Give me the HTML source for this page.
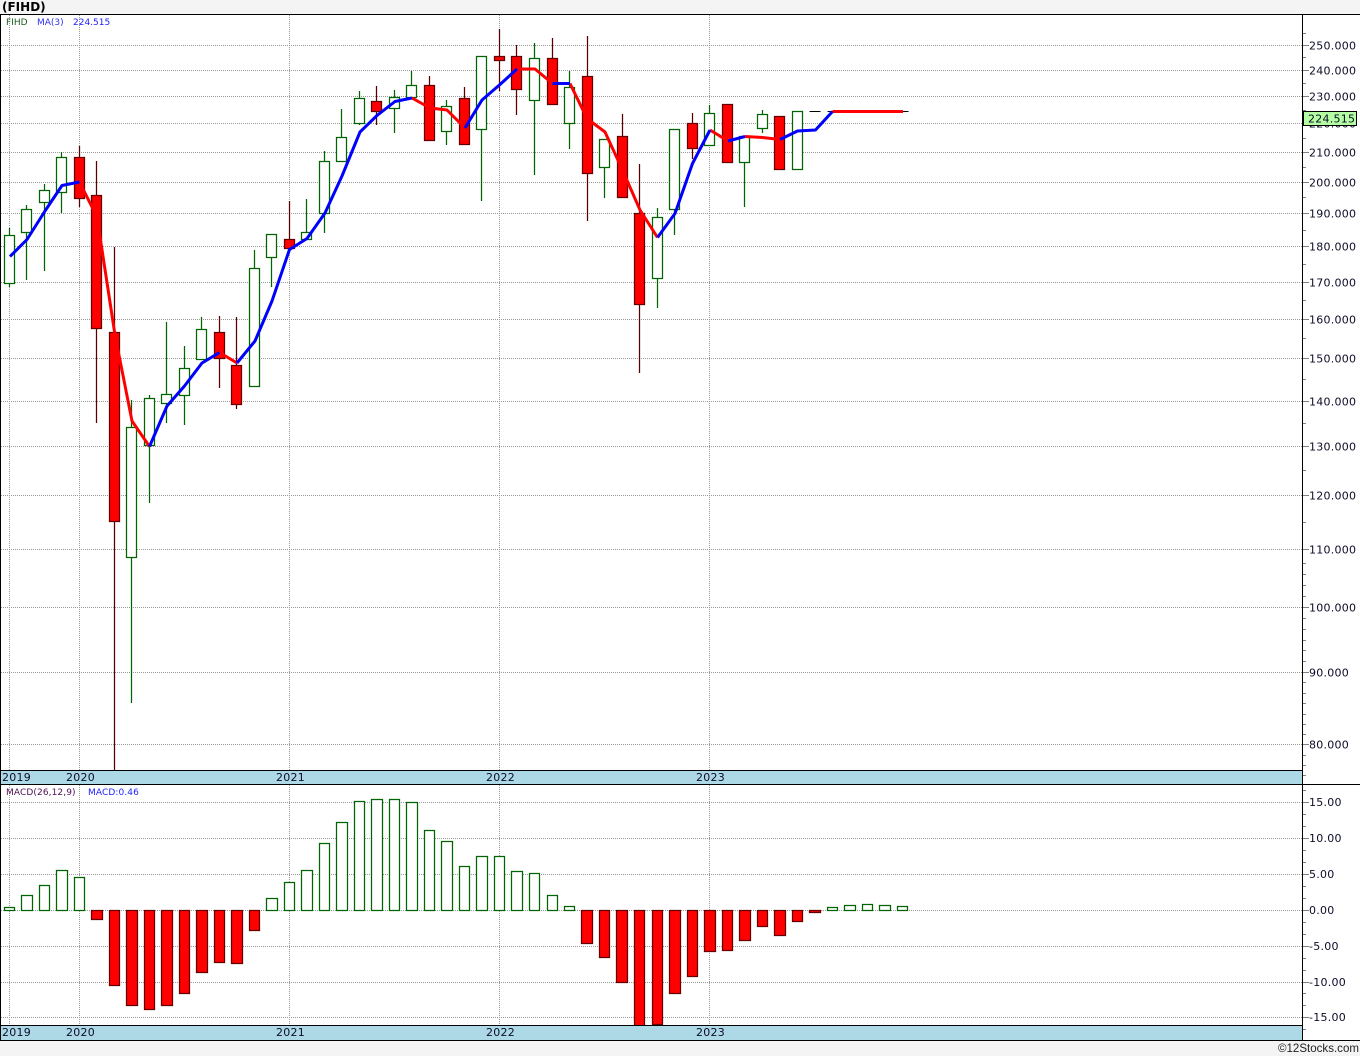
<!DOCTYPE html>
<html lang="en"><head><meta charset="utf-8"><title>FIHD</title>
<style>
html,body{margin:0;padding:0;background:#f4f4f4;width:1360px;height:1056px;overflow:hidden}
svg{display:block}
text{font-family:"DejaVu Sans","Liberation Sans",sans-serif;font-size:11px;fill:#0c0c28;letter-spacing:.25px}
.s{font-size:9px;letter-spacing:0}
</style></head><body>
<svg width="1360" height="1056" viewBox="0 0 1360 1056" xmlns="http://www.w3.org/2000/svg">
<rect x="0" y="0" width="1360" height="1056" fill="#f4f4f4"/>
<rect x="0" y="14" width="1360" height="1026" fill="#fff"/>
<g fill="none" stroke="#999" stroke-dasharray="1 1" shape-rendering="crispEdges">
<path d="M1 45.5H1303M1 70.5H1303M1 96.5H1303M1 123.5H1303M1 152.5H1303M1 182.5H1303M1 213.5H1303M1 246.5H1303M1 282.5H1303M1 319.5H1303M1 358.5H1303M1 401.5H1303M1 446.5H1303M1 495.5H1303M1 549.5H1303M1 607.5H1303M1 672.5H1303M1 744.5H1303"/>
<path d="M1 802.5H1303M1 838.5H1303M1 874.5H1303M1 910.5H1303M1 946.5H1303M1 982.5H1303M1 1017.5H1303"/>
<path d="M9.5 15V770M79.5 15V770M289.5 15V770M499.5 15V770M709.5 15V770"/>
<path d="M9.5 785V1025M79.5 785V1025M289.5 785V1025M499.5 785V1025M709.5 785V1025"/>
</g>
<g fill="none" stroke="#808080" shape-rendering="crispEdges">
<path d="M1303 45.5h6M1303 70.5h6M1303 96.5h6M1303 123.5h6M1303 152.5h6M1303 182.5h6M1303 213.5h6M1303 246.5h6M1303 282.5h6M1303 319.5h6M1303 358.5h6M1303 401.5h6M1303 446.5h6M1303 495.5h6M1303 549.5h6M1303 607.5h6M1303 672.5h6M1303 744.5h6M1303 802.5h6M1303 838.5h6M1303 874.5h6M1303 910.5h6M1303 946.5h6M1303 982.5h6M1303 1017.5h6"/>
<path d="M1303 33.5h3M1303 57.5h3M1303 83.5h3M1303 110.5h3M1303 138.5h3M1303 167.5h3M1303 197.5h3M1303 230.5h3M1303 264.5h3M1303 300.5h3M1303 338.5h3M1303 379.5h3M1303 423.5h3M1303 470.5h3M1303 522.5h3M1303 563.5h3M1303 574.5h3M1303 585.5h3M1303 596.5h3M1303 618.5h3M1303 629.5h3M1303 640.5h3M1303 650.5h3M1303 661.5h3M1303 682.5h3M1303 693.5h3M1303 703.5h3M1303 714.5h3M1303 724.5h3M1303 734.5h3M1303 755.5h3M1303 765.5h3M1303 775.5h3"/>
<path d="M1303 790.5h3M1303 814.5h3M1303 826.5h3M1303 850.5h3M1303 862.5h3M1303 886.5h3M1303 898.5h3M1303 922.5h3M1303 934.5h3M1303 958.5h3M1303 970.5h3M1303 993.5h3M1303 1005.5h3M1303 1029.5h3"/>
</g>
<!-- wicks -->
<path fill="none" stroke="#006400" stroke-width="1.25" d="M9.5 228V287M26.5 205V280M44.5 184V271M61.5 152V213M131.5 400V703M149.5 395V503M166.5 322V423M184.5 346V425M201.5 317V360M254.5 250V386M271.5 234V287M306.5 199V239M324.5 151V233M341.5 109V161M359.5 91V125M394.5 90V133M411.5 71V97M446.5 100V145M481.5 56V201M534.5 43V175M569.5 71V149M604.5 139V198M657.5 208V308M674.5 129V235M709.5 105V145M744.5 136V207M762.5 110V133"/>
<path fill="none" stroke="#5a0000" stroke-width="1.25" d="M79.5 146V207M96.5 161V423M114.5 247V770M219.5 316V388M236.5 317V409M289.5 201V248M376.5 86V125M429.5 76V140M464.5 87V144M499.5 29V91M516.5 45V115M552.5 38V104M587.5 36V221M622.5 114V197M639.5 164V373M692.5 113V159"/>
<!-- bodies -->
<path fill="#fff" stroke="#006400" stroke-width="1.25" d="M4.5 235.5h10V283.5h-10zM21.5 209.5h10V232.5h-10zM39.5 190.5h10V202.5h-10zM56.5 157.5h10V192.5h-10zM126.5 427.5h10V557.5h-10zM144.5 398.5h10V445.5h-10zM161.5 394.5h10V403.5h-10zM179.5 368.5h10V395.5h-10zM196.5 329.5h10V359.5h-10zM249.5 268.5h10V386.5h-10zM266.5 234.5h10V257.5h-10zM301.5 232.5h10V239.5h-10zM319.5 161.5h10V213.5h-10zM336.5 137.5h10V161.5h-10zM354.5 98.5h10V123.5h-10zM389.5 97.5h10V108.5h-10zM406.5 85.5h10V97.5h-10zM441.5 106.5h10V131.5h-10zM476.5 56.5h10V129.5h-10zM529.5 58.5h10V100.5h-10zM564.5 87.5h10V123.5h-10zM599.5 139.5h10V167.5h-10zM652.5 217.5h10V278.5h-10zM669.5 129.5h10V209.5h-10zM704.5 113.5h10V145.5h-10zM739.5 136.5h10V162.5h-10zM757.5 114.5h10V128.5h-10zM792.5 111.5h10V169.5h-10z"/>
<path fill="#f00" stroke="#660000" stroke-width="1.25" d="M74.5 157.5h10V198.5h-10zM91.5 195.5h10V328.5h-10zM109.5 332.5h10V521.5h-10zM214.5 332.5h10V358.5h-10zM231.5 365.5h10V404.5h-10zM284.5 239.5h10V248.5h-10zM371.5 101.5h10V111.5h-10zM424.5 85.5h10V140.5h-10zM459.5 98.5h10V144.5h-10zM494.5 56.5h10V60.5h-10zM511.5 56.5h10V89.5h-10zM547.5 58.5h10V104.5h-10zM582.5 76.5h10V173.5h-10zM617.5 136.5h10V197.5h-10zM634.5 213.5h10V304.5h-10zM687.5 123.5h10V148.5h-10zM722.5 104.5h10V162.5h-10zM774.5 116.5h10V169.5h-10z"/>
<path fill="none" stroke="#000" shape-rendering="crispEdges" d="M809.5 111.5h11M827.5 111.5h10M844.5 111.5h11M862.5 111.5h10M879.5 111.5h11M897.5 111.5h11"/>
<!-- MA(3) -->
<g fill="none" stroke-width="3" stroke-linejoin="round">
<g stroke="#f00">
<path d="M79.5 182L97 217L115 335L132 421L149.5 446.5"/>
<path d="M219.5 352.5L237 363"/>
<path d="M412 98L430 108L447 110L465 128"/>
<path d="M517 69L535 69L552.5 83.5"/>
<path d="M570 83.5L587 118.5L605 132L622 169L640 210L657.5 237.5"/>
<path d="M710 130L728 141"/>
<path d="M745 136.5L762.5 137.5L780 139.5"/>
<path d="M832.5 111.5L903 111.5"/>
</g>
<g stroke="#00f">
<path d="M10 256.5L27 239.5L45 211L62 185.5L79.5 182"/>
<path d="M149.5 446.5L167 406L184.5 386L202 363L219.5 352.5"/>
<path d="M237 363L255 341L272 301L289.5 249.5L307 238.5L325 213L342 176L360 132L377 115.5L395 101.5L412 98"/>
<path d="M465 128L482 100L500 84.5L517 69"/>
<path d="M552.5 83.5L570 83.5"/>
<path d="M657.5 237.5L675 213.5L692.5 163.5L710 130"/>
<path d="M728 141L745 136.5"/>
<path d="M780 139.5L797.5 131L815.5 130L832.5 111.5"/>
</g>
</g>
<!-- MACD bars -->
<path fill="#fff" stroke="#006400" stroke-width="1.25" d="M4.5 907.5H14.5V910.5H4.5ZM21.5 895.5H32.5V910.5H21.5ZM39.5 885.5H49.5V910.5H39.5ZM56.5 870.5H67.5V910.5H56.5ZM74.5 877.5H84.5V910.5H74.5ZM266.5 898.5H277.5V910.5H266.5ZM284.5 882.5H294.5V910.5H284.5ZM301.5 870.5H312.5V910.5H301.5ZM319.5 843.5H329.5V910.5H319.5ZM336.5 822.5H347.5V910.5H336.5ZM354.5 801.5H364.5V910.5H354.5ZM371.5 799.5H382.5V910.5H371.5ZM389.5 799.5H399.5V910.5H389.5ZM406.5 802.5H417.5V910.5H406.5ZM424.5 830.5H434.5V910.5H424.5ZM441.5 841.5H452.5V910.5H441.5ZM459.5 866.5H469.5V910.5H459.5ZM476.5 856.5H487.5V910.5H476.5ZM494.5 856.5H504.5V910.5H494.5ZM511.5 871.5H522.5V910.5H511.5ZM529.5 873.5H539.5V910.5H529.5ZM547.5 895.5H557.5V910.5H547.5ZM564.5 906.5H574.5V910.5H564.5ZM827.5 907.5H837.5V910.5H827.5ZM844.5 905.5H855.5V910.5H844.5ZM862.5 904.5H872.5V910.5H862.5ZM879.5 905.5H890.5V910.5H879.5ZM897.5 906.5H907.5V910.5H897.5Z"/>
<path fill="#f00" stroke="#660000" stroke-width="1.25" d="M91.5 910.5H102.5V919.5H91.5ZM109.5 910.5H119.5V985.5H109.5ZM126.5 910.5H137.5V1005.5H126.5ZM144.5 910.5H154.5V1009.5H144.5ZM161.5 910.5H172.5V1005.5H161.5ZM179.5 910.5H189.5V993.5H179.5ZM196.5 910.5H207.5V972.5H196.5ZM214.5 910.5H224.5V962.5H214.5ZM231.5 910.5H242.5V963.5H231.5ZM249.5 910.5H259.5V930.5H249.5ZM581.5 910.5H592.5V943.5H581.5ZM599.5 910.5H609.5V957.5H599.5ZM616.5 910.5H627.5V982.5H616.5ZM634.5 910.5H644.5V1026H634.5ZM652.5 910.5H662.5V1024.5H652.5ZM669.5 910.5H680.5V993.5H669.5ZM687.5 910.5H697.5V976.5H687.5ZM704.5 910.5H715.5V951.5H704.5ZM722.5 910.5H732.5V950.5H722.5ZM739.5 910.5H750.5V940.5H739.5ZM757.5 910.5H767.5V926.5H757.5ZM774.5 910.5H785.5V935.5H774.5ZM792.5 910.5H802.5V921.5H792.5ZM809.5 910.5H820.5V912.5H809.5Z"/>
<!-- bands -->
<rect x="1" y="771" width="1301" height="13" fill="#add8e6"/>
<rect x="1" y="1026" width="1301" height="14" fill="#add8e6"/>
<g fill="none" stroke="#000" shape-rendering="crispEdges">
<path d="M0 14.5H1360M0 784.5H1360M0 1040.5H1360M0 770.5H1302M0 1025.5H1302M0.5 14V1040M1302.5 14V1040"/>
</g>
<!-- labels -->
<text x="2" y="11" style="font-size:12px;font-weight:bold;fill:#000;letter-spacing:0">(FIHD)</text>
<text class="s" x="6" y="25" style="fill:#1e5a1e">FIHD</text>
<text class="s" x="37" y="25" style="fill:#3030f0">MA(3)</text>
<text class="s" x="73" y="25" style="fill:#2020ff">224.515</text>
<text class="s" x="6" y="795" style="fill:#501050;letter-spacing:.1px">MACD(26,12,9)</text>
<text class="s" x="88" y="795" style="fill:#2020ff;letter-spacing:.1px">MACD:0.46</text>
<g>
<text x="1309" y="49.5">250.000</text>
<text x="1309" y="74.5">240.000</text>
<text x="1309" y="100.5">230.000</text>
<text x="1309" y="127.5">220.000</text>
<text x="1309" y="156.5">210.000</text>
<text x="1309" y="186.5">200.000</text>
<text x="1309" y="217.5">190.000</text>
<text x="1309" y="250.5">180.000</text>
<text x="1309" y="286.5">170.000</text>
<text x="1309" y="323.5">160.000</text>
<text x="1309" y="362.5">150.000</text>
<text x="1309" y="405.5">140.000</text>
<text x="1309" y="450.5">130.000</text>
<text x="1309" y="499.5">120.000</text>
<text x="1309" y="553.5">110.000</text>
<text x="1309" y="611.5">100.000</text>
<text x="1309" y="676.5">90.000</text>
<text x="1309" y="748.5">80.000</text>
<text x="1309" y="806">15.00</text>
<text x="1309" y="842">10.00</text>
<text x="1309" y="878">5.00</text>
<text x="1309" y="914">0.00</text>
<text x="1309" y="950">-5.00</text>
<text x="1309" y="986">-10.00</text>
<text x="1309" y="1021">-15.00</text>
</g>
<rect x="1303.5" y="111.5" width="53" height="14" fill="#b4ffa4" stroke="#000" shape-rendering="crispEdges"/>
<text x="1308" y="122.5">224.515</text>
<g>
<text x="2" y="781">2019</text><text x="66" y="781">2020</text><text x="276" y="781">2021</text><text x="486" y="781">2022</text><text x="696" y="781">2023</text>
<text x="2" y="1036">2019</text><text x="66" y="1036">2020</text><text x="276" y="1036">2021</text><text x="486" y="1036">2022</text><text x="696" y="1036">2023</text>
</g>
<text x="1278" y="1052" textLength="81" lengthAdjust="spacingAndGlyphs" style="font-family:'Liberation Sans',sans-serif;font-size:12px;fill:#222;letter-spacing:0">©12Stocks.com</text>
</svg>
</body></html>
